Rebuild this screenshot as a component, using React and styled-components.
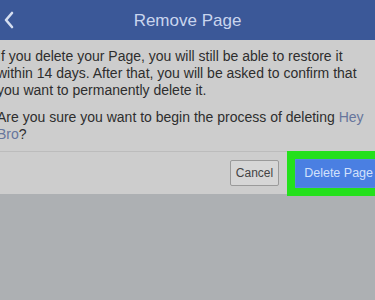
import React from 'react'
import styled, { createGlobalStyle } from 'styled-components'

const Global = createGlobalStyle`
  html, body {
    margin: 0;
    padding: 0;
    background: #adb0b3;
    overflow: hidden;
  }
  body {
    width: 375px;
    height: 300px;
    font-family: "Liberation Sans", Arial, sans-serif;
  }
`

const Screen = styled.div`
  width: 375px;
  height: 300px;
  background: #adb0b3;
  overflow: hidden;
`

const Header = styled.header`
  height: 40px;
  background: #3b5898;
  display: flex;
  align-items: center;
  justify-content: center;
  position: relative;
  color: #c9d5ee;
  font-size: 17px;
`

const Back = styled.button`
  position: absolute;
  left: 3px;
  top: 11px;
  border: 0;
  background: none;
  padding: 0;
  display: flex;
`

const Title = styled.h1`
  margin: 0;
  font-size: 17px;
  font-weight: 400;
  padding-top: 1px;
`

const Panel = styled.section`
  background: #cdcdcd;
`

const Body = styled.div`
  padding: 8px 0 8px 0;
  margin-left: -3px;
  border-bottom: 1px solid #bcbcbc;
`

const Para = styled.p`
  margin: 0;
  font-size: 14px;
  line-height: 17px;
  color: #2e2e2e;
  & + & {
    margin-top: 10px;
  }
`

const Link = styled.span`
  color: #66759c;
`

const Actions = styled.div`
  height: 42px;
  display: flex;
  align-items: center;
  justify-content: flex-end;
  gap: 16px;
  margin-right: -7px;
`

const Button = styled.button`
  font-family: "Liberation Sans", Arial, sans-serif;
  font-size: ${p => (p.primary ? '12.5px' : '12px')};
  height: ${p => (p.primary ? '29px' : '26px')};
  padding: 0 ${p => (p.primary ? '8px' : '5px')};
  border-radius: ${p => (p.primary ? '0' : '2px')};
  border: 1px solid ${p => (p.primary ? '#5687e4' : '#9a9a9a')};
  background: ${p => (p.primary ? '#4a7fe2' : '#d6d6d6')};
  color: ${p => (p.primary ? '#d2e1fb' : '#444')};
  outline: ${p => (p.primary ? '8px solid #24e01c' : 'none')};
`

export default function App() {
  return (
    <Screen>
      <Global />
      <Header>
        <Back aria-label="Back">
          <svg width="12" height="18" viewBox="0 0 12 18">
            <path d="M9 2 L3 9 L9 16" fill="none" stroke="#d5def0" strokeWidth="2.6" strokeLinecap="round" strokeLinejoin="round" />
          </svg>
        </Back>
        <Title>Remove Page</Title>
      </Header>
      <Panel>
        <Body>
          <Para>
            If you delete your Page, you will still be able to restore it within 14 days. After that, you will be asked to confirm that you want to permanently delete it.
          </Para>
          <Para>
            Are you sure you want to begin the process of deleting <Link>Hey Bro</Link>?
          </Para>
        </Body>
        <Actions>
          <Button>Cancel</Button>
          <Button primary>Delete Page</Button>
        </Actions>
      </Panel>
    </Screen>
  )
}
